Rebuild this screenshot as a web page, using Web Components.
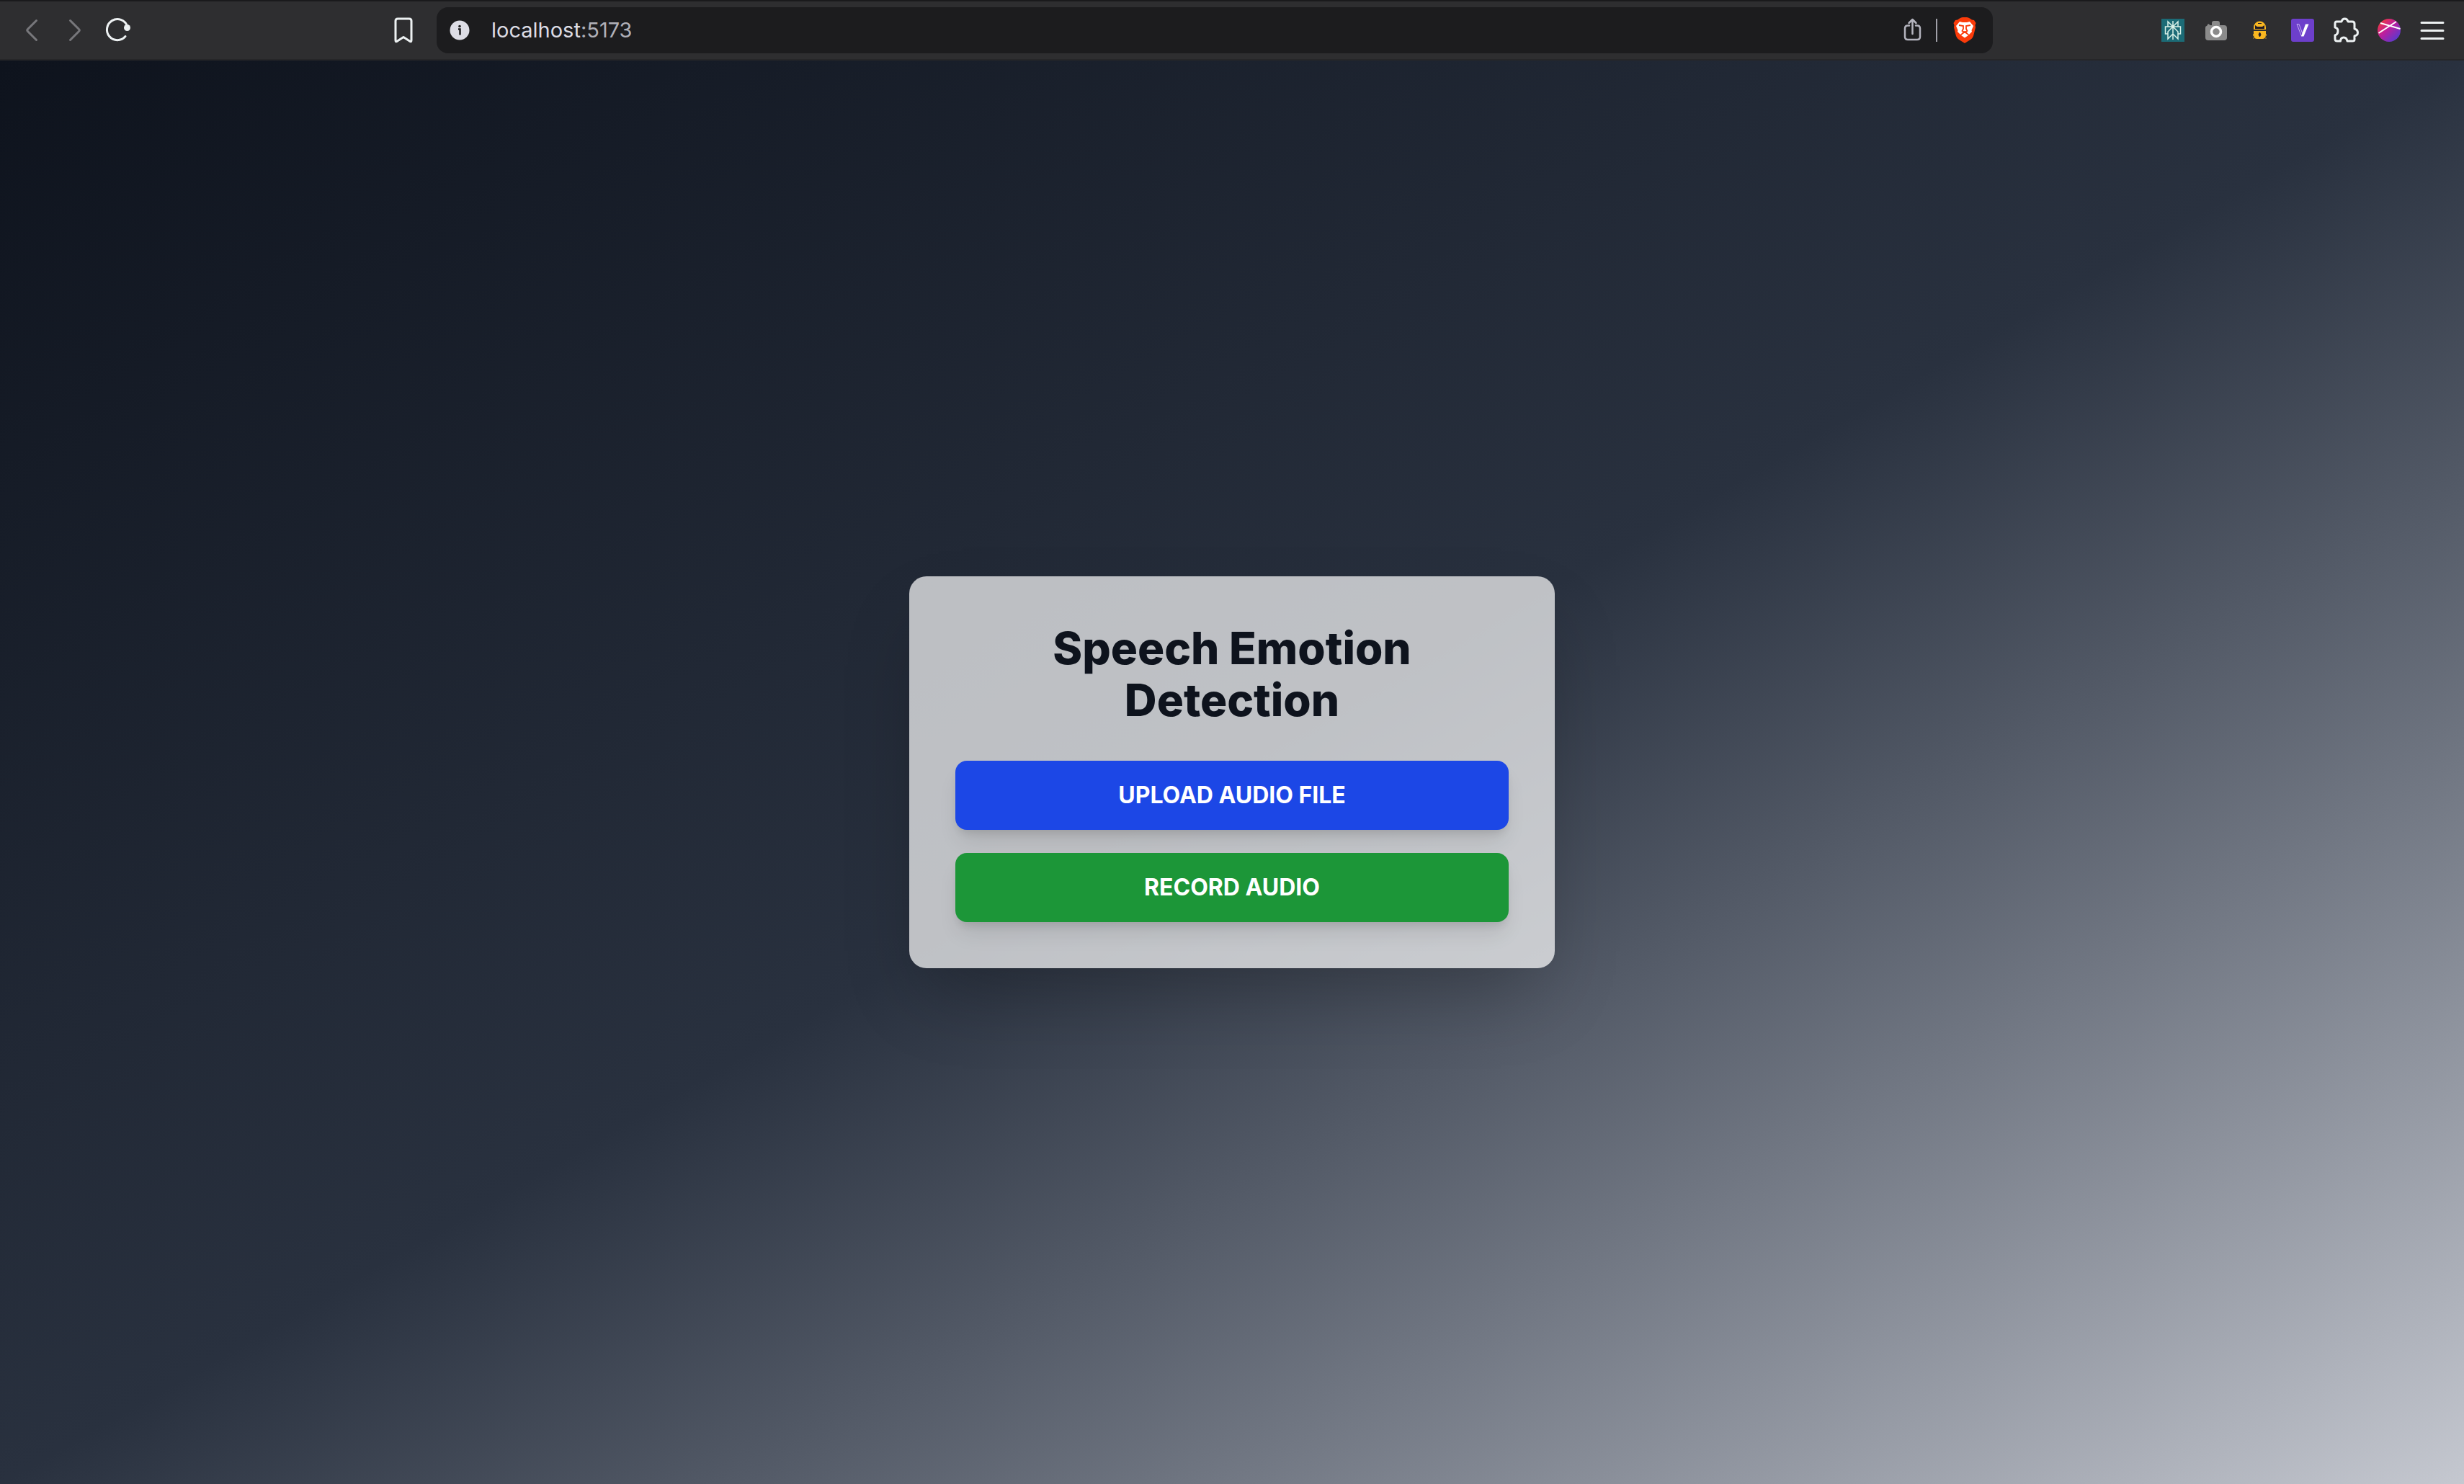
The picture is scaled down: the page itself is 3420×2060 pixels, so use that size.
<!DOCTYPE html>
<html lang="en">
<head>
<meta charset="utf-8">
<title>Speech Emotion Detection</title>
<style>
html, body { height: 100%; margin: 0; }
body { display: flex; flex-direction: column; background: #10141e; }
emotion-page { flex: 1; }
</style>
</head>
<body>
<browser-bar></browser-bar>
<emotion-page>
  <emotion-card>
    <span slot="title">Speech Emotion Detection</span>
    <action-button tone="blue">UPLOAD AUDIO FILE</action-button>
    <action-button tone="green">RECORD AUDIO</action-button>
  </emotion-card>
</emotion-page>
<script>
const define = (name, html) => customElements.define(name, class extends HTMLElement {
  constructor() {
    super();
    this.attachShadow({ mode: 'open' }).innerHTML = html;
  }
});

define('browser-bar', `
<style>
:host { display: block; }
* { box-sizing: border-box; }
.bar { display: flex; align-items: center; justify-content: space-between; height: 84px; padding: 0 28px 0 32px;
  background: #2e2e30; border-top: 2px solid #1a1a1c; border-bottom: 2px solid #262628; }
.group { display: flex; align-items: center; }
.nav { gap: 28px; width: 508px; }
.ext { gap: 28px; }
button { display: block; width: 32px; height: 36px; padding: 0; border: 0; background: none; flex: none; }
svg { display: block; width: 32px; height: 36px; overflow: visible; }
.mark { margin-right: 34px; }
.address { display: flex; flex: 1; align-items: center; height: 64px; margin-right: 234px; padding: 0 23px 0 16px;
  border-radius: 16px; background: #1c1c1e; }
.url { flex: 1; margin-left: 28px; font: 29px/36px Inter, "Liberation Sans", sans-serif; color: #dddde5; }
.url span { color: #b0b0b8; }
.url a { color: inherit; text-decoration: none; }
.sep { width: 2px; height: 32px; margin: 0 22px 0 16px; background: #a0a0a8; }
</style>
<div class="bar">
  <div class="group nav">
    <button aria-label="Back"><svg viewBox="0 0 32 36" fill="none" stroke="#77777b" stroke-width="3" stroke-linecap="round" stroke-linejoin="round"><path d="M18.500 4.500 L6.500 16.500 Q5 18 6.500 19.500 L18.500 31.500"/></svg></button>
    <button aria-label="Forward"><svg viewBox="0 0 32 36" fill="none" stroke="#77777b" stroke-width="3" stroke-linecap="round" stroke-linejoin="round"><path d="M5.500 4.500 L17.500 16.500 Q19 18 17.500 19.500 L5.500 31.500"/></svg></button>
    <button aria-label="Reload"><svg viewBox="0 0 32 36" fill="none" stroke="#edf1f2" stroke-width="3" stroke-linecap="round"><path d="M22 26.500 A14.500 14.500 0 1 1 24.500 12"/><circle cx="24.500" cy="14.500" r="4.500" fill="#edf1f2" stroke="none"/></svg></button>
  </div>
  <button class="mark" aria-label="Bookmark"><svg viewBox="0 0 32 36" fill="none" stroke="#edf1f2" stroke-width="3" stroke-linejoin="round"><path d="M12 2 H28 Q31 2 31 5 V32 Q31 35 28.500 33 L20 27.500 L11.500 33 Q9 35 9 32 V5 Q9 2 12 2 Z"/></svg></button>
  <div class="address">
    <button aria-label="Site information"><svg viewBox="0 0 32 36"><circle cx="16" cy="18" r="13.500" fill="#dddde5"/><circle cx="16" cy="12.500" r="1.800" fill="#1c1c1e"/><path d="M14 16.500 H16.500 V24.500" fill="none" stroke="#1c1c1e" stroke-width="2.500"/></svg></button>
    <div class="url"><a href="#">localhost<span>:5173</span></a></div>
    <button aria-label="Share"><svg viewBox="0 0 32 36" fill="none" stroke="#b4b4be" stroke-width="2.500" stroke-linecap="round" stroke-linejoin="round"><path d="M11 11.500 H9 Q5 11.500 5 15.500 V27 Q5 31 9 31 H22 Q26 31 26 27 V15.500 Q26 11.500 22 11.500 H20 M15.500 23 V3 M10.500 8 L15.500 3 L20.500 8"/></svg></button>
    <span class="sep"></span>
    <button aria-label="Brave Shields"><svg viewBox="0 0 32 36"><path d="M6 3.500 L9 1.500 Q11 0 13 0 H19 Q21 0 23 1.500 L26 3.500 L29 4 L31.500 8 L30.500 11 L31 14 L28 26 Q27 29 24 31 L16 36 L8 31 Q5 29 4 26 L1 14 L1.500 11 L.5 8 L3 4 Z" fill="#fb3b0a"/><path d="M9 6 L13 7 H19 L23 6 L28 12 L25.500 18 L26 20 L22 24 L18 20 L16 19 L14 20 L10 24 L6 20 L6.500 18 L4 12 Z M16 21.500 L21 25 L16 28.500 L11 25 Z" fill="#fff"/><path d="M8 11 L14 12 V16 L12.500 19 L16 21 L19.500 19 L18 16 V12 L24 11" fill="none" stroke="#fb3b0a" stroke-width="1.800"/></svg></button>
  </div>
  <div class="group ext">
    <button aria-label="Perplexity"><svg viewBox="0 0 32 36"><path d="M0 2 H32 V34 H0 Z" fill="#1c6b76"/><path d="M16 5 V31 M9 13 V6 L16 13 L23 6 V13 M16 13 L9 20 V30 L16 23 L23 30 V20 L16 13 M9 23 H5.500 V13 H26.500 V23 H23" fill="none" stroke="#d9f1e8" stroke-width="1.500"/></svg></button>
    <button aria-label="Screenshot"><svg viewBox="0 0 32 36"><path d="M3 12 L5 9 L8 11 H10 V8 Q10 5 13 5 H18 Q21 5 21 8 V11 H27 Q31 11 31 15 V28 Q31 32 27 32 H5 Q1 32 1 28 V15 Q1 12 3 12 Z" fill="#8b8b8b"/><circle cx="16" cy="20" r="6.500" fill="#8b8b8b" stroke="#fff" stroke-width="3.500"/></svg></button>
    <button aria-label="Password lock"><svg viewBox="0 0 32 36"><path d="M8 17 V14 A8.500 8.500 0 0 1 25 14 V17 Z" fill="#f9b720"/><path d="M10 16 V11 L13 13 H20 L23 11 V16 Z" fill="#211b27"/><path d="M14 8.500 H19" stroke="#211b27"/><path d="M8 19 H25 V24 Q25 30 20 30 H13 Q8 30 8 24 Z" fill="#f9b720"/><path d="M16.500 21 L18 24 L16.500 27 L15 24 Z" fill="#211b27" stroke="#211b27"/><path d="M7.500 23 V26 M8 28 V30 M25.500 23 V26 M25 28 V30" stroke="#b98a22"/></svg></button>
    <button aria-label="V extension"><svg viewBox="0 0 32 36"><rect y="2" width="32" height="32" rx="3" fill="#6d3fcb"/><path d="M8 9.500 H11 L16 23 L14.500 26 Z" fill="none" stroke="#c5aff1"/><path d="M20 9.500 H24.500 L17.500 26.500 H14 Z" fill="#fff"/></svg></button>
    <button aria-label="Extensions"><svg viewBox="0 0 32 36" fill="none" stroke="#edf1f2" stroke-width="3" stroke-linejoin="round"><path d="M3 6 H10 Q11 2 14.500 2 Q18 2 19 6 H25 Q28 6 28 9 V16 Q32.500 17 32.500 21.500 Q32.500 25 28 26 V31 Q28 33 25 33 H18 Q17 28 13 28 Q9 28 8.500 33 H4 Q1 33 1 30 V25 Q5 23.500 5 19 Q5 15 1 14 V9 Q1 6 3 6 Z"/></svg></button>
    <button aria-label="Profile"><svg viewBox="0 0 32 36"><defs><linearGradient id="g" x1="0" y1="0" x2="1" y2="1"><stop offset=".1" stop-color="#f23a3e"/><stop offset=".45" stop-color="#bc1e9e"/><stop offset="1" stop-color="#3b42dd"/></linearGradient></defs><circle cx="16" cy="18" r="16" fill="url(#g)"/><path d="M4 8 L31.500 16 M1.500 22 L26 6" stroke="#fff" stroke-width="2"/></svg></button>
    <button aria-label="Menu"><svg viewBox="0 0 32 36" stroke="#edf1f2" stroke-width="3" stroke-linecap="round"><path d="M1 7.500 H31 M1 18.500 H31 M1 29.500 H31"/></svg></button>
  </div>
</div>`);

define('emotion-page', `
<style>
:host { display: flex; align-items: center; justify-content: center;
  background: linear-gradient(to bottom right in oklab, #0e131d, #29313f, #c5c8d0); }
</style>
<slot></slot>`);

define('emotion-card', `
<style>
:host { display: block; box-sizing: border-box; width: 896px; max-width: 100%; padding: 64px; border-radius: 24px;
  background: rgba(255, 255, 255, .7); box-shadow: 0 50px 100px -24px rgba(0, 0, 0, .25); }
h1 { margin: 0 0 48px; padding: 0 100px; text-align: center; color: #0e131d;
  font: 800 62px/72px Inter, "Liberation Sans", sans-serif; }
.actions { display: flex; flex-direction: column; gap: 32px; }
</style>
<h1><slot name="title"></slot></h1>
<div class="actions"><slot></slot></div>`);

define('action-button', `
<style>
:host { display: block; --fill: #1c47e6; }
:host([tone="green"]) { --fill: #1c9638; }
button { display: block; width: 100%; height: 96px; padding: 0; border: 0; border-radius: 16px;
  background: var(--fill); color: #fff; font: 700 32px/48px Inter, "Liberation Sans", sans-serif;
  box-shadow: 0 20px 30px -6px rgba(0, 0, 0, .1), 0 8px 12px -4px rgba(0, 0, 0, .1); }
</style>
<button><slot></slot></button>`);
</script>
</body>
</html>
